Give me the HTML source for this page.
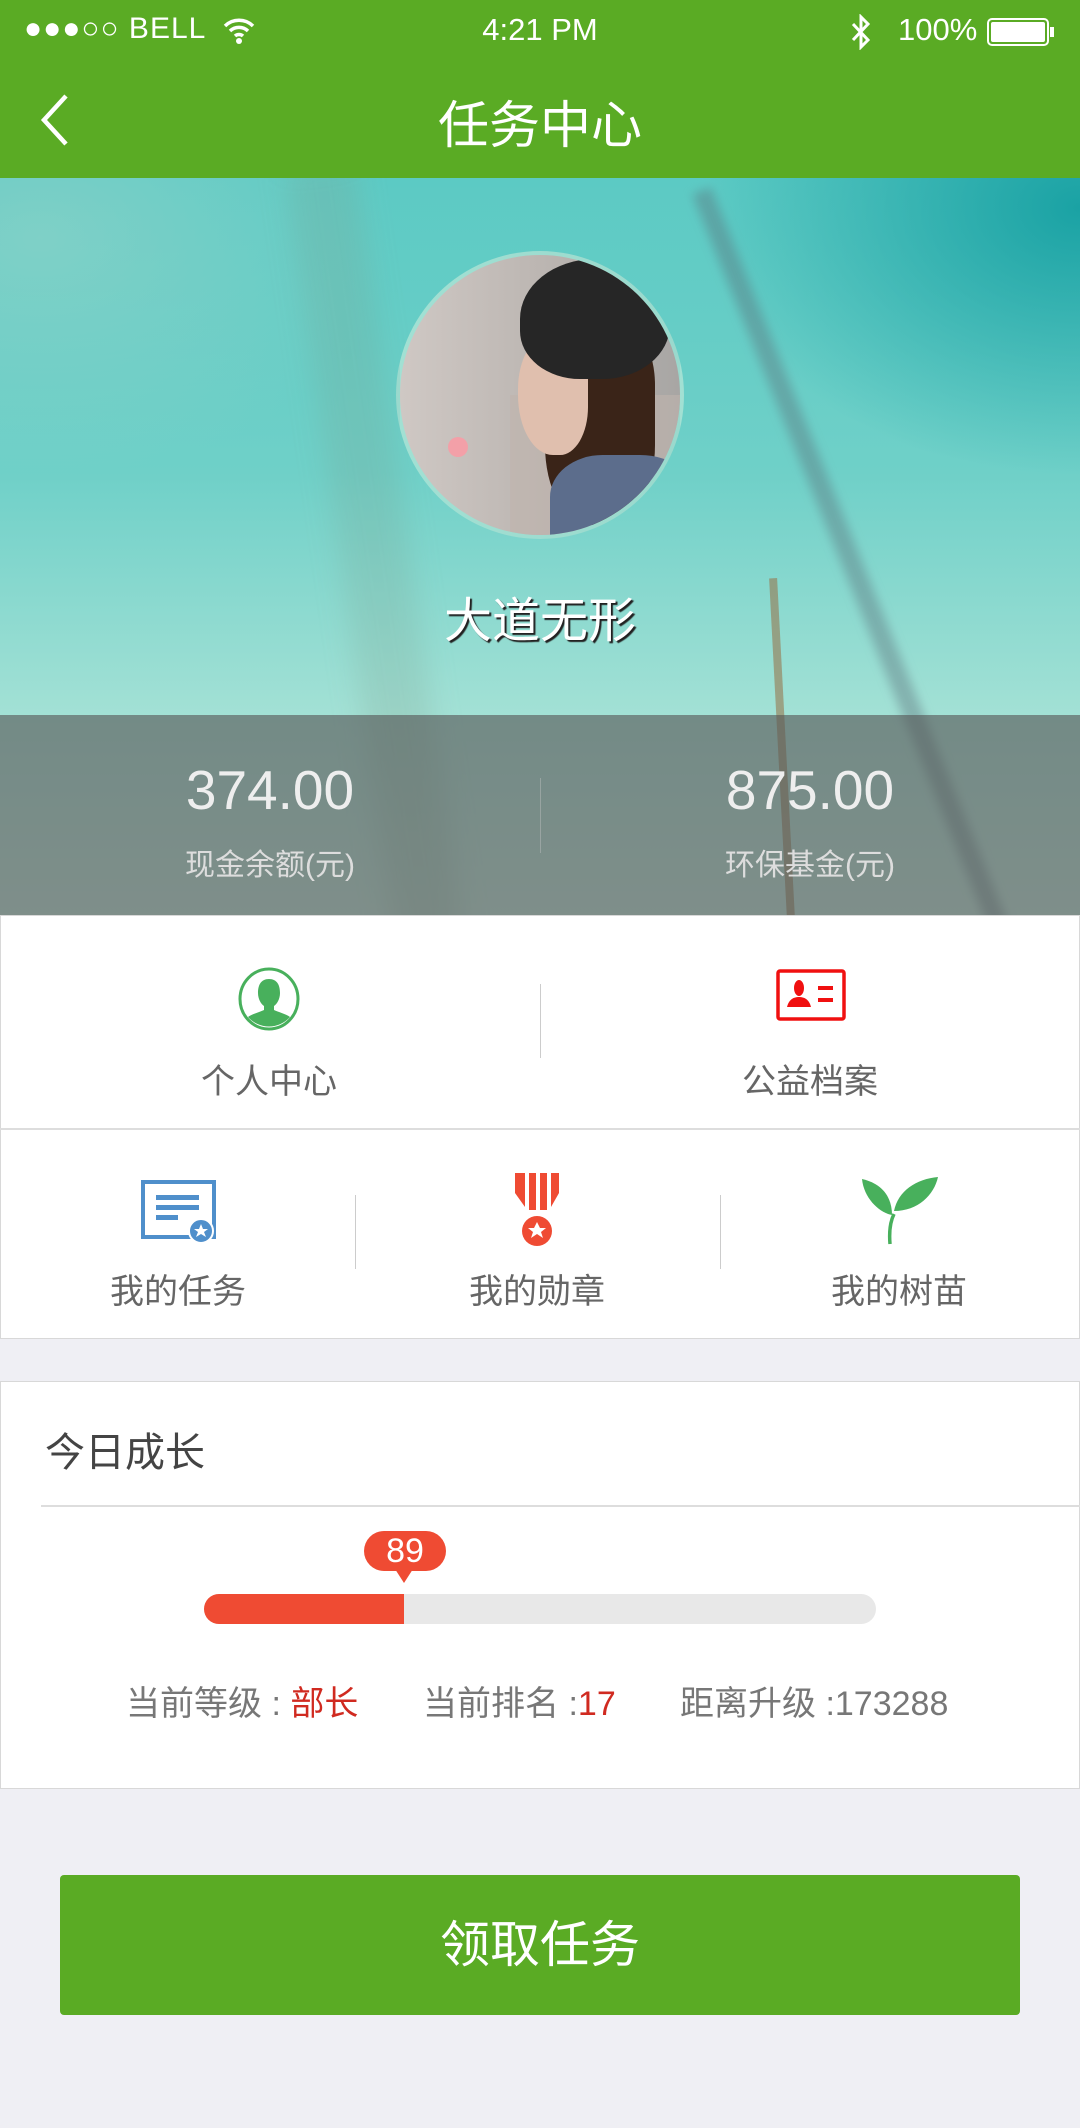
<!DOCTYPE html>
<html><head><meta charset="utf-8"><style>
*{margin:0;padding:0;box-sizing:border-box}
body{width:1080px;height:2128px;background:#efeff4;position:relative;overflow:hidden;font-family:"Liberation Sans","Noto Sans CJK SC",sans-serif}
.a{position:absolute}
.c{text-align:center}
</style></head><body>
<div class="a" style="left:0;top:0;width:1080px;height:178px;background:#5aab24"></div>
<div class="a" style="left:24px;top:12px;font-size:30px;color:#fff;letter-spacing:1px">●●●○○ BELL</div>
<svg class="a" style="left:222px;top:16px" width="34" height="28" viewBox="0 0 34 28"><path d="M3 10a20 20 0 0 1 28 0M8 15a13 13 0 0 1 18 0M13 20a6 6 0 0 1 8 0" stroke="#fff" stroke-width="3.5" fill="none"/><circle cx="17" cy="25" r="3" fill="#fff"/></svg>
<div class="a c" style="left:440px;top:12px;width:200px;font-size:31px;color:#fff">4:21 PM</div>
<svg class="a" style="left:848px;top:14px" width="26" height="36" viewBox="0 0 26 36"><path d="M5 10l15 16-7 7V3l7 7L5 26" stroke="#fff" stroke-width="3" fill="none"/></svg>
<div class="a" style="left:898px;top:12px;font-size:31px;color:#fff">100%</div>
<div class="a" style="left:987px;top:18px;width:62px;height:28px;border:2px solid #fff;border-radius:5px;padding:2px"><div style="width:100%;height:100%;background:#fff;border-radius:2px"></div></div>
<div class="a" style="left:1050px;top:27px;width:4px;height:10px;background:#fff"></div>
<svg class="a" style="left:38px;top:92px" width="34" height="56" viewBox="0 0 34 56"><path d="M28 4L6 28l22 24" stroke="#fff" stroke-width="4.5" fill="none"/></svg>
<div class="a c" style="left:340px;top:84px;width:400px;font-size:51px;color:#fff">任务中心</div>

<div class="a" style="left:0;top:178px;width:1080px;height:737px;overflow:hidden;background:linear-gradient(180deg,#5ccac4 0%,#6fd0c8 40%,#a6e2d6 75%,#c2ece0 100%)">
<div class="a" style="left:700px;top:0;width:380px;height:300px;background:radial-gradient(ellipse at 100% 10%,#1aa2a4 0%,rgba(40,170,170,0) 70%)"></div>
<div class="a" style="left:0;top:0;width:400px;height:300px;background:radial-gradient(ellipse at 10% 20%,rgba(140,210,200,.7) 0%,rgba(140,210,200,0) 70%)"></div>
<div class="a" style="left:340px;top:-20px;width:70px;height:800px;background:rgba(120,150,130,.2);transform:rotate(-8deg);filter:blur(14px)"></div>
<div class="a" style="left:860px;top:-20px;width:20px;height:900px;background:rgba(90,110,120,.4);transform:rotate(-22deg);filter:blur(5px)"></div>
<div class="a" style="left:778px;top:400px;width:8px;height:340px;background:rgba(150,120,80,.6);transform:rotate(-3deg)"></div>
<div class="a" style="left:0;top:537px;width:1080px;height:200px;background:rgba(85,85,85,.62)"></div>
<div class="a" style="left:396px;top:73px;width:288px;height:288px;border-radius:50%;border:4px solid rgba(150,230,215,.8);overflow:hidden;background:linear-gradient(90deg,#cfc8c4 0%,#bcb6b2 50%,#a8a6a4 100%)">
<div class="a" style="left:110px;top:140px;width:200px;height:150px;background:#c0b4ae;opacity:.6"></div>
<div class="a" style="left:145px;top:70px;width:110px;height:200px;background:#3a2418;border-radius:30% 30% 40% 40%"></div>
<div class="a" style="left:118px;top:80px;width:70px;height:120px;border-radius:45% 20% 40% 50%;background:#e0bfae"></div>
<div class="a" style="left:120px;top:4px;width:150px;height:120px;border-radius:50% 50% 45% 40%;background:#262626"></div>
<div class="a" style="left:150px;top:200px;width:150px;height:120px;background:#5c6d8c;border-radius:35% 40% 0 0"></div>
<div class="a" style="left:48px;top:182px;width:20px;height:20px;border-radius:50%;background:#f3a0a8"></div>
</div>
<div class="a c" style="left:340px;top:403px;width:400px;font-size:48px;color:#fff;text-shadow:2px 2px 1px #222">大道无形</div>
<div class="a c" style="left:70px;top:580px;width:400px;font-size:55px;color:#eee">374.00</div>
<div class="a c" style="left:70px;top:662px;width:400px;font-size:30px;color:#ddd">现金余额(元)</div>
<div class="a c" style="left:610px;top:580px;width:400px;font-size:55px;color:#eee">875.00</div>
<div class="a c" style="left:610px;top:662px;width:400px;font-size:30px;color:#ddd">环保基金(元)</div>
<div class="a" style="left:540px;top:600px;width:1px;height:75px;background:rgba(200,200,200,.4)"></div>
</div>

<div class="a" style="left:0;top:915px;width:1080px;height:424px;background:#fff;border:1px solid #d8d8d8"></div>
<div class="a" style="left:0;top:1128px;width:1080px;height:2px;background:#ddd"></div>
<div class="a" style="left:540px;top:984px;width:1px;height:74px;background:#ccc"></div>
<div class="a" style="left:355px;top:1195px;width:1px;height:74px;background:#ccc"></div>
<div class="a" style="left:720px;top:1195px;width:1px;height:74px;background:#ccc"></div>

<svg class="a" style="left:238px;top:967px" width="62" height="64" viewBox="0 0 62 64"><ellipse cx="31" cy="32" rx="29" ry="30" fill="#fff" stroke="#48b05c" stroke-width="3"/><path d="M31 12c-8 0-11 6-11 14 0 6 3 11 6 13v4c-4 2-12 4-16 7a28 28 0 0 0 42 0c-4-3-12-5-16-7v-4c3-2 6-7 6-13 0-8-3-14-11-14z" fill="#48b05c"/></svg>
<div class="a c" style="left:119px;top:1054px;width:300px;font-size:34px;color:#666">个人中心</div>
<svg class="a" style="left:776px;top:969px" width="70" height="52" viewBox="0 0 70 52"><rect x="2" y="2" width="66" height="48" rx="2" fill="none" stroke="#f01010" stroke-width="3.5"/><ellipse cx="23" cy="19" rx="5" ry="8" fill="#f01010"/><path d="M11 38c2-8 7-10 12-10s10 2 12 10z" fill="#f01010"/><rect x="42" y="17" width="15" height="4" fill="#f01010"/><rect x="42" y="29" width="15" height="4" fill="#f01010"/></svg>
<div class="a c" style="left:660px;top:1054px;width:300px;font-size:34px;color:#666">公益档案</div>

<svg class="a" style="left:141px;top:1180px" width="76" height="66" viewBox="0 0 76 66"><rect x="2" y="2" width="71" height="55" fill="none" stroke="#4f8fcb" stroke-width="4"/><rect x="15" y="15" width="43" height="5" fill="#4f8fcb"/><rect x="15" y="25" width="43" height="5" fill="#4f8fcb"/><rect x="15" y="35" width="22" height="5" fill="#4f8fcb"/><circle cx="60" cy="51" r="12" fill="#4f8fcb" stroke="#fff" stroke-width="2"/><path d="M60 44l2 5h5l-4 3 2 5-5-3-5 3 2-5-4-3h5z" fill="#fff"/></svg>
<div class="a c" style="left:28px;top:1264px;width:300px;font-size:34px;color:#666">我的任务</div>
<svg class="a" style="left:513px;top:1173px" width="48" height="73" viewBox="0 0 48 73"><path d="M2 0h10v34L2 20zM16 0h7v37h-7zM27 0h7v37h-7zM38 0h8v20l-8 14z" fill="#ef4b33"/><ellipse cx="24" cy="58" rx="15" ry="15" fill="#ef4b33"/><path d="M24 49l3 6h6l-5 4 2 6-6-4-6 4 2-6-5-4h6z" fill="#fff"/></svg>
<div class="a c" style="left:387px;top:1264px;width:300px;font-size:34px;color:#666">我的勋章</div>
<svg class="a" style="left:860px;top:1175px" width="80" height="70" viewBox="0 0 80 70"><path d="M30 69c-1-12 0-22 4-30" stroke="#48b05c" stroke-width="3.5" fill="none"/><path d="M32 40C20 38 4 24 2 4c18 4 30 16 30 36z" fill="#48b05c"/><path d="M34 36C38 16 56 4 78 2c-4 18-20 34-44 34z" fill="#48b05c"/></svg>
<div class="a c" style="left:749px;top:1264px;width:300px;font-size:34px;color:#666">我的树苗</div>

<div class="a" style="left:0;top:1381px;width:1080px;height:408px;background:#fff;border:1px solid #d8d8d8"></div>
<div class="a" style="left:45px;top:1420px;font-size:40px;color:#444">今日成长</div>
<div class="a" style="left:41px;top:1505px;width:1039px;height:2px;background:#ddd"></div>
<div class="a" style="left:204px;top:1594px;width:672px;height:30px;border-radius:15px;background:#e8e8e8;overflow:hidden"><div style="width:200px;height:100%;background:#ef4b33"></div></div>
<div class="a c" style="left:364px;top:1531px;width:82px;height:40px;border-radius:20px;background:#ef4b33;color:#fff;font-size:34px;line-height:40px">89</div>
<div class="a" style="left:395px;top:1569px;width:0;height:0;border-left:9px solid transparent;border-right:9px solid transparent;border-top:14px solid #ef4b33"></div>
<div class="a" style="left:126px;top:1676px;font-size:34px;color:#777;white-space:nowrap">当前等级 : <span style="color:#d02a20">部长</span></div>
<div class="a" style="left:423px;top:1676px;font-size:34px;color:#777;white-space:nowrap">当前排名 :<span style="color:#d02a20">17</span></div>
<div class="a" style="left:680px;top:1676px;font-size:34px;color:#777;white-space:nowrap">距离升级 :173288</div>

<div class="a c" style="left:60px;top:1875px;width:960px;height:140px;background:#5aab24;border-radius:4px;color:#fff;font-size:50px;line-height:140px">领取任务</div>
</body></html>
